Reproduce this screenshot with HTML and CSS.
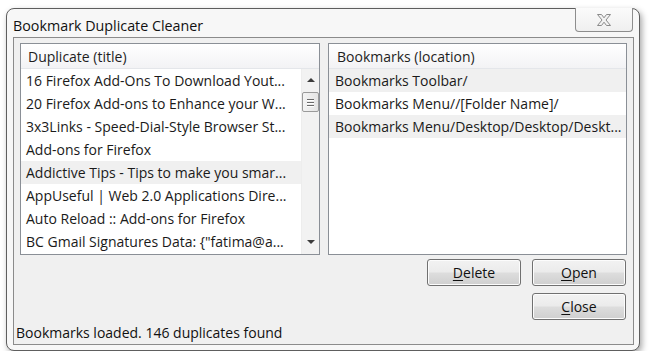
FILE: index.html
```html
<!DOCTYPE html>
<html>
<head>
<meta charset="utf-8">
<link rel="stylesheet" href="styles.css">
</head>
<body>
<div class="window">
  <div class="titlebar">
    <span class="title">Bookmark Duplicate Cleaner</span>
    <div class="close-btn">
      <svg width="16" height="14" viewBox="0 0 16 14">
        <path d="M1.5 1.5 H5.5 L8 4.8 L10.5 1.5 H14.5 L10 7 L14.5 12.5 H10.5 L8 9.2 L5.5 12.5 H1.5 L6 7 Z" fill="#f2f2f2" stroke="#8a8a8a" stroke-width="1" stroke-linejoin="round"/>
      </svg>
    </div>
  </div>
  <div class="client">
    <div class="lists">
      <div class="listbox">
        <div class="header">Duplicate (title)</div>
        <div class="body">
          <div class="rows">
            <div class="row">16 Firefox Add-Ons To Download Yout...</div>
            <div class="row">20 Firefox Add-ons to Enhance your W...</div>
            <div class="row">3x3Links - Speed-Dial-Style Browser St...</div>
            <div class="row">Add-ons for Firefox</div>
            <div class="row hover">Addictive Tips - Tips to make you smar...</div>
            <div class="row">AppUseful | Web 2.0 Applications Dire...</div>
            <div class="row">Auto Reload :: Add-ons for Firefox</div>
            <div class="row">BC Gmail Signatures Data: {"fatima@a...</div>
          </div>
          <div class="scrollbar">
            <div class="arrow up"></div>
            <div class="thumb"><span></span><span></span><span></span></div>
            <div class="track"></div>
            <div class="arrow down"></div>
          </div>
        </div>
      </div>
      <div class="listbox">
        <div class="header right">Bookmarks (location)</div>
        <div class="body">
          <div class="rows">
            <div class="row alt">Bookmarks Toolbar/</div>
            <div class="row">Bookmarks Menu//[Folder Name]/</div>
            <div class="row alt">Bookmarks Menu/Desktop/Desktop/Deskt...</div>
          </div>
        </div>
      </div>
    </div>
    <div class="buttons">
      <div class="btn delete"><u>D</u>elete</div>
      <div class="btn open"><u>O</u>pen</div>
      <div class="btn close"><u>C</u>lose</div>
    </div>
    <div class="status">Bookmarks loaded. 146 duplicates found</div>
  </div>
</div>
</body>
</html>
```
FILE: styles.css
```css
* { box-sizing: border-box; }
body {
  margin: 0;
  background: #ffffff;
  font-family: "Open Sans", "Noto Sans", sans-serif;
  color: #1a1a1a;
}
.window {
  margin: 8px 0 0 6px;
  width: 634px;
  height: 343px;
  border: 1px solid #5e5e5e;
  border-radius: 8px;
  background: #f7f7f7;
  box-shadow: 2px 3px 6px rgba(0,0,0,0.35);
  display: flex;
  flex-direction: column;
}
.titlebar {
  height: 28px;
  display: flex;
  justify-content: space-between;
  align-items: flex-start;
  padding: 0 6px 0 6px;
}
.title {
  font-size: 14.3px;
  line-height: 16px;
  margin-top: 9px;
  color: #111;
}
.close-btn {
  width: 58px;
  height: 24px;
  margin-top: -1px;
  border: 1px solid #8d8d8d;
  border-top: none;
  border-radius: 0 0 4px 4px;
  background: linear-gradient(#fbfbfb, #efefef);
  display: flex;
  align-items: center;
  justify-content: center;
  padding-top: 1px;
}
.client {
  flex: 1;
  margin: 0 5px 5px 6px;
  border: 1px solid #8b8b8b;
  background: #f0f0f0;
  padding: 5px 6px 0 6px;
  display: flex;
  flex-direction: column;
}
.lists {
  display: flex;
  gap: 8px;
}
.listbox {
  width: 300px;
  height: 212px;
  border: 1px solid #8a8f96;
  background: #fff;
  display: flex;
  flex-direction: column;
  font-size: 14px;
}
.listbox + .listbox { width: 299px; }
.header {
  height: 25px;
  padding: 3px 0 0 7px;
  line-height: 20px;
  background: linear-gradient(#ffffff, #f3f3f5);
  border-bottom: 1px solid #e4e6ea;
  color: #1e1e1e;
}
.header.right { padding-left: 8px; }
.body {
  flex: 1;
  display: flex;
  min-height: 0;
}
.rows {
  flex: 1;
  overflow: hidden;
}
.row {
  height: 23px;
  line-height: 23px;
  padding-left: 5px;
  white-space: nowrap;
  overflow: hidden;
}
.row.hover, .row.alt { background: #f0f0f0; }
.listbox + .listbox .row { padding-left: 6px; }
.scrollbar {
  width: 18px;
  background: #f2f2f2;
  border-left: 1px solid #ededed;
  display: flex;
  flex-direction: column;
  align-items: center;
}
.arrow {
  width: 0;
  height: 0;
  border-left: 4px solid transparent;
  border-right: 4px solid transparent;
}
.arrow.up {
  margin-top: 9px;
  border-bottom: 4px solid #3c3c3c;
}
.arrow.down {
  margin-bottom: 10px;
  border-top: 4px solid #3c3c3c;
}
.thumb {
  width: 17px;
  height: 20px;
  margin-top: 10px;
  border: 1px solid #9a9a9a;
  border-radius: 2px;
  background: linear-gradient(90deg, #f4f4f4, #e4e4e4);
  display: flex;
  flex-direction: column;
  align-items: center;
  justify-content: center;
  gap: 2px;
}
.thumb span {
  width: 7px;
  height: 1px;
  background: #6a6a6a;
  box-shadow: 0 1px 0 #ffffff;
}
.track { flex: 1; }
.buttons {
  margin-top: 4px;
  display: grid;
  grid-template-columns: 94px 94px;
  grid-template-rows: 27px 27px;
  column-gap: 11px;
  row-gap: 7px;
  justify-content: end;
  padding-right: 1px;
}
.btn {
  border: 1px solid #707070;
  border-radius: 3px;
  background: linear-gradient(#f2f2f2 0%, #ebebeb 48%, #dddddd 52%, #cfcfcf 100%);
  box-shadow: inset 0 0 0 1px #fcfcfc;
  font-size: 14px;
  line-height: 25px;
  text-align: center;
  color: #111;
}
.btn u { text-decoration-thickness: 1px; text-underline-offset: 2px; }
.btn.close { grid-column: 2; grid-row: 2; }
.status {
  margin-top: 3px;
  margin-left: -4px;
  font-size: 14px;
  line-height: 20px;
  color: #111;
}
```
